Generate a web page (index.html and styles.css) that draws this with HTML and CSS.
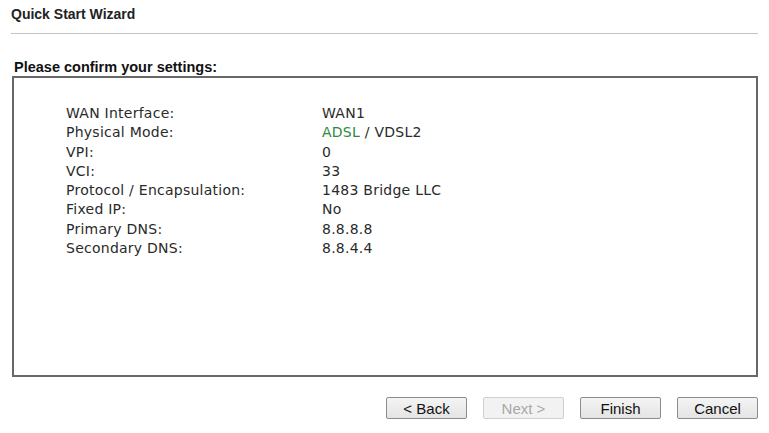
FILE: index.html
```html
<!DOCTYPE html>
<html>
    <head>
        <meta charset="UTF-8">
        <meta name="viewport" content="width=device-width, initial-scale=1.0">
        <title>Quick Start Wizard</title>
        <link rel="stylesheet" href="styles.css">
    </head>

    <body>
        <div class="Wizard">
            <div class="WizardTitle">Quick Start Wizard</div>

            <div class="ConfirmLabel">Please confirm your settings:</div>
            <div class="SettingsBox">
                <table class="Settings">
                    <tr><td>WAN Interface:</td><td>WAN1</td></tr>
                    <tr><td>Physical Mode:</td><td><span class="Active">ADSL</span> / VDSL2</td></tr>
                    <tr><td>VPI:</td><td>0</td></tr>
                    <tr><td>VCI:</td><td>33</td></tr>
                    <tr><td>Protocol / Encapsulation:</td><td>1483 Bridge LLC</td></tr>
                    <tr><td>Fixed IP:</td><td>No</td></tr>
                    <tr><td>Primary DNS:</td><td>8.8.8.8</td></tr>
                    <tr><td>Secondary DNS:</td><td>8.8.4.4</td></tr>
                </table>
            </div>

            <div class="Buttons">
                <button class="WizButton">&lt; Back</button>
                <button class="WizButton" disabled>Next &gt;</button>
                <button class="WizButton">Finish</button>
                <button class="WizButton">Cancel</button>
            </div>
        </div>
    </body>
</html>
```

FILE: styles.css
```css
body {
    margin: 0;
    background: #fff;
    font-family: "Liberation Sans", Arial, sans-serif;
    color: #222;
}

.Wizard {
    width: 747px;
    padding: 6px 0 0 11px;
}

.WizardTitle {
    font-size: 14px;
    font-weight: bold;
    line-height: 16px;
    padding-bottom: 11px;
    border-bottom: 1px solid #c4c4c4;
}

.ConfirmLabel {
    font-size: 14.5px;
    font-weight: bold;
    line-height: 17px;
    margin: 25px 0 0 3px;
    color: #111;
}

.SettingsBox {
    margin-left: 1px;
    border: 2px solid #686868;
    padding: 26px 0 0 52px;
    box-sizing: border-box;
    height: 301px;
}

.Settings {
    border-collapse: collapse;
    font-family: "DejaVu Sans", Verdana, sans-serif;
    font-size: 14px;
    letter-spacing: 0.25px;
    color: #2a2a2a;
}

.Settings td {
    padding: 0;
    height: 19.3px;
    line-height: 19.3px;
}

.Settings td:first-child {
    width: 256px;
}

.Settings .Active {
    color: #2f8a3c;
}

.Buttons {
    display: flex;
    justify-content: flex-end;
    gap: 16px;
    margin-top: 20px;
}

.WizButton {
    width: 81px;
    height: 22px;
    padding: 0;
    font-family: "Liberation Sans", Arial, sans-serif;
    font-size: 15px;
    color: #111;
    background: linear-gradient(#f4f4f4, #e4e4e4);
    border: 1px solid #8c8c8c;
    border-radius: 2px;
}

.WizButton:disabled {
    color: #a8a8a8;
    background: #f2f2f2;
    border-color: #cfcfcf;
}
```
